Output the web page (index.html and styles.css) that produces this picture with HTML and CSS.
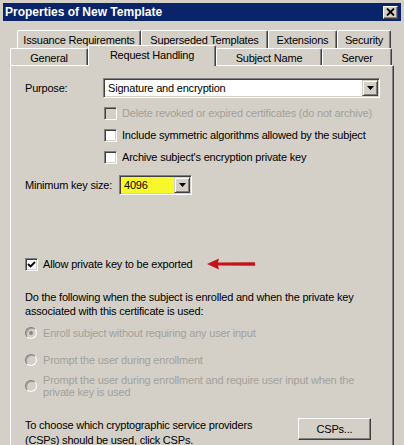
FILE: index.html
```html
<!DOCTYPE html>
<html>
<head>
<meta charset="utf-8">
<link rel="stylesheet" href="styles.css">
</head>
<body>
<div class="window">
  <div class="titlebar">
    <span class="title">Properties of New Template</span>
    <span class="close"><svg width="9" height="8" viewBox="0 0 9 8"><path d="M1 0.5 L8 7.5 M8 0.5 L1 7.5" stroke="#000" stroke-width="1.8"/></svg></span>
  </div>
  <div class="tabs">
    <div class="tabrow back">
      <div class="tab t-iss">Issuance Requirements</div>
      <div class="tab t-sup">Superseded Templates</div>
      <div class="tab t-ext">Extensions</div>
      <div class="tab t-sec">Security</div>
    </div>
    <div class="tabrow front">
      <div class="tab t-gen">General</div>
      <div class="tab t-req selected">Request Handling</div>
      <div class="tab t-sub">Subject Name</div>
      <div class="tab t-srv">Server</div>
    </div>
  </div>
  <div class="panel">
    <div class="field purpose">
      <span class="label lbl-purpose">Purpose:</span>
      <div class="combo combo-purpose">
        <span class="combo-text">Signature and encryption</span>
        <span class="drop"><svg width="7" height="4" viewBox="0 0 7 4"><path d="M0 0 H7 L3.5 4 Z" fill="#000"/></svg></span>
      </div>
    </div>
    <div class="checklist">
      <div class="check-row disabled"><span class="cb cb-disabled"></span><span>Delete revoked or expired certificates (do not archive)</span></div>
      <div class="check-row"><span class="cb"></span><span>Include symmetric algorithms allowed by the subject</span></div>
      <div class="check-row"><span class="cb"></span><span>Archive subject's encryption private key</span></div>
    </div>
    <div class="field keysize">
      <span class="label lbl-key">Minimum key size:</span>
      <div class="combo combo-key">
        <span class="combo-text">4096</span>
        <span class="drop"><svg width="7" height="4" viewBox="0 0 7 4"><path d="M0 0 H7 L3.5 4 Z" fill="#000"/></svg></span>
      </div>
    </div>
    <div class="check-row allow">
      <span class="cb"><svg width="9" height="9" viewBox="0 0 9 9"><path d="M1 4 L3.5 6.5 L8 2" stroke="#000" stroke-width="1.9" fill="none"/></svg></span>
      <span>Allow private key to be exported</span>
      <svg class="arrow" width="52" height="14" viewBox="0 0 52 14"><path d="M2 7 L14 1.5 L13 5.5 L50 5.3 L50 8.7 L13 8.5 L14 12.5 Z" fill="#c4121a"/></svg>
    </div>
    <p class="desc">Do the following when the subject is enrolled and when the private key associated with this certificate is used:</p>
    <div class="radio-row r1 disabled"><span class="radio checked"></span><span>Enroll subject without requiring any user input</span></div>
    <div class="radio-row r2 disabled"><span class="radio"></span><span>Prompt the user during enrollment</span></div>
    <div class="radio-row r3 disabled"><span class="radio"></span><span class="multi">Prompt the user during enrollment and require user input when the private key is used</span></div>
    <div class="bottom">
      <p class="csp-text">To choose which cryptographic service providers (CSPs) should be used, click CSPs.</p>
      <div class="button">CSPs...</div>
    </div>
  </div>
</div>
</body>
</html>
```
FILE: styles.css
```css
* { box-sizing: border-box; }
html, body { margin: 0; padding: 0; }
body {
  width: 404px;
  height: 445px;
  overflow: hidden;
  background: #d4d0c8;
  font-family: "Liberation Sans", Arial, sans-serif;
  font-size: 11px;
  letter-spacing: -0.2px;
  color: #000;
}
.window {
  height: 445px;
  padding: 3px 3px 0 3px;
}
.titlebar {
  height: 18px;
  background: #0a246a;
  display: flex;
  align-items: center;
  justify-content: space-between;
  padding: 0 3px 0 2px;
}
.title {
  color: #fff;
  font-weight: bold;
  font-size: 12px;
  letter-spacing: 0;
}
.close {
  width: 15px;
  height: 13px;
  background: #d4d0c8;
  border: 1px solid;
  border-color: #fff #404040 #404040 #fff;
  box-shadow: inset -1px -1px #808080;
  display: flex;
  align-items: center;
  justify-content: center;
}
.tabs {
  margin-top: 9px;
}
.tabrow {
  display: flex;
}
.tabrow.back {
  margin-left: 14px;
  height: 18px;
}
.tabrow.front {
  margin-left: 7px;
  height: 17px;
  align-items: flex-end;
}
.tab {
  height: 18px;
  background: #d4d0c8;
  border-top: 1px solid #fff;
  border-left: 1px solid #fff;
  border-right: 1px solid #404040;
  box-shadow: inset -1px 0 #808080;
  border-radius: 2px 2px 0 0;
  display: flex;
  align-items: center;
  justify-content: center;
  white-space: nowrap;
}
.front .tab {
  height: 17px;
  padding-top: 2px;
}
.front .tab.selected {
  height: 21px;
  margin-bottom: -1px;
  padding-top: 0;
  padding-bottom: 2px;
  position: relative;
  z-index: 1;
}
.t-iss { width: 124px; }
.t-sup { width: 127px; }
.t-ext { width: 69px; }
.t-sec { width: 54px; }
.t-gen { width: 78px; }
.t-req { width: 128px; }
.t-sub { width: 106px; }
.t-srv { width: 70px; }

.panel {
  margin-left: 7px;
  width: 384px;
  height: 400px;
  border-top: 1px solid #fff;
  border-left: 1px solid #fff;
  border-right: 1px solid #404040;
  box-shadow: inset -1px 0 #808080;
  padding: 12px 0 0 14px;
  display: flex;
  flex-direction: column;
}
.field {
  display: flex;
  align-items: center;
  height: 20px;
}
.lbl-purpose { width: 78px; }
.lbl-key { width: 94px; }
.combo {
  height: 20px;
  background: #fff;
  border: 1px solid;
  border-color: #808080 #fff #fff #808080;
  box-shadow: inset 1px 1px #404040, inset -1px -1px #d4d0c8;
  display: flex;
  align-items: center;
  justify-content: space-between;
  padding: 1px 1px 1px 1px;
}
.combo-text {
  padding-left: 3px;
}
.combo-purpose { width: 277px; }
.combo-key { width: 73px; background: #f7f72c; }
.drop {
  width: 16px;
  height: 16px;
  background: #d4d0c8;
  border: 1px solid;
  border-color: #d4d0c8 #404040 #404040 #d4d0c8;
  box-shadow: inset 1px 1px #fff, inset -1px -1px #808080;
  display: flex;
  align-items: center;
  justify-content: center;
}
.checklist {
  margin-left: 79px;
  margin-top: 4px;
  display: flex;
  flex-direction: column;
}
.check-row {
  display: flex;
  align-items: center;
  height: 22px;
  white-space: nowrap;
}
.cb {
  width: 13px;
  height: 13px;
  flex: none;
  margin-right: 5px;
  background: #fff;
  border: 1px solid;
  border-color: #808080 #fff #fff #808080;
  box-shadow: inset 1px 1px #404040, inset -1px -1px #d4d0c8;
  display: flex;
  align-items: center;
  justify-content: center;
}
.cb-disabled { background: #d4d0c8; }
.disabled { color: #a3a09a; }
.keysize { margin-top: 7px; }
.allow {
  margin-top: 60px;
  height: 18px;
}
.arrow {
  margin-left: 12px;
}
.desc {
  margin: 17px 0 0 0;
  width: 350px;
  line-height: 14px;
}
.radio-row {
  display: flex;
  align-items: center;
  white-space: nowrap;
}
.radio {
  width: 12px;
  height: 12px;
  flex: none;
  margin-right: 6px;
  border-radius: 50%;
  border: 1px solid;
  border-color: #808080 #fff #fff #808080;
  box-shadow: inset 1px 1px #a0a0a0;
  background: #d4d0c8;
  display: flex;
  align-items: center;
  justify-content: center;
}
.radio.checked::after {
  content: "";
  width: 4px;
  height: 4px;
  border-radius: 50%;
  background: #8c8a86;
}
.r1 { margin-top: 7px; height: 16px; }
.r2 { margin-top: 11px; height: 16px; }
.r3 { margin-top: 6px; align-items: center; }
.multi {
  white-space: normal;
  width: 320px;
  line-height: 12px;
}
.bottom {
  margin-top: 20px;
  display: flex;
  align-items: flex-start;
  justify-content: space-between;
  padding-right: 22px;
}
.csp-text {
  margin: 0;
  width: 250px;
  line-height: 15px;
}
.button {
  width: 73px;
  height: 22px;
  border: 1px solid;
  border-color: #fff #404040 #404040 #fff;
  box-shadow: inset -1px -1px #808080;
  display: flex;
  align-items: center;
  justify-content: center;
}
```
